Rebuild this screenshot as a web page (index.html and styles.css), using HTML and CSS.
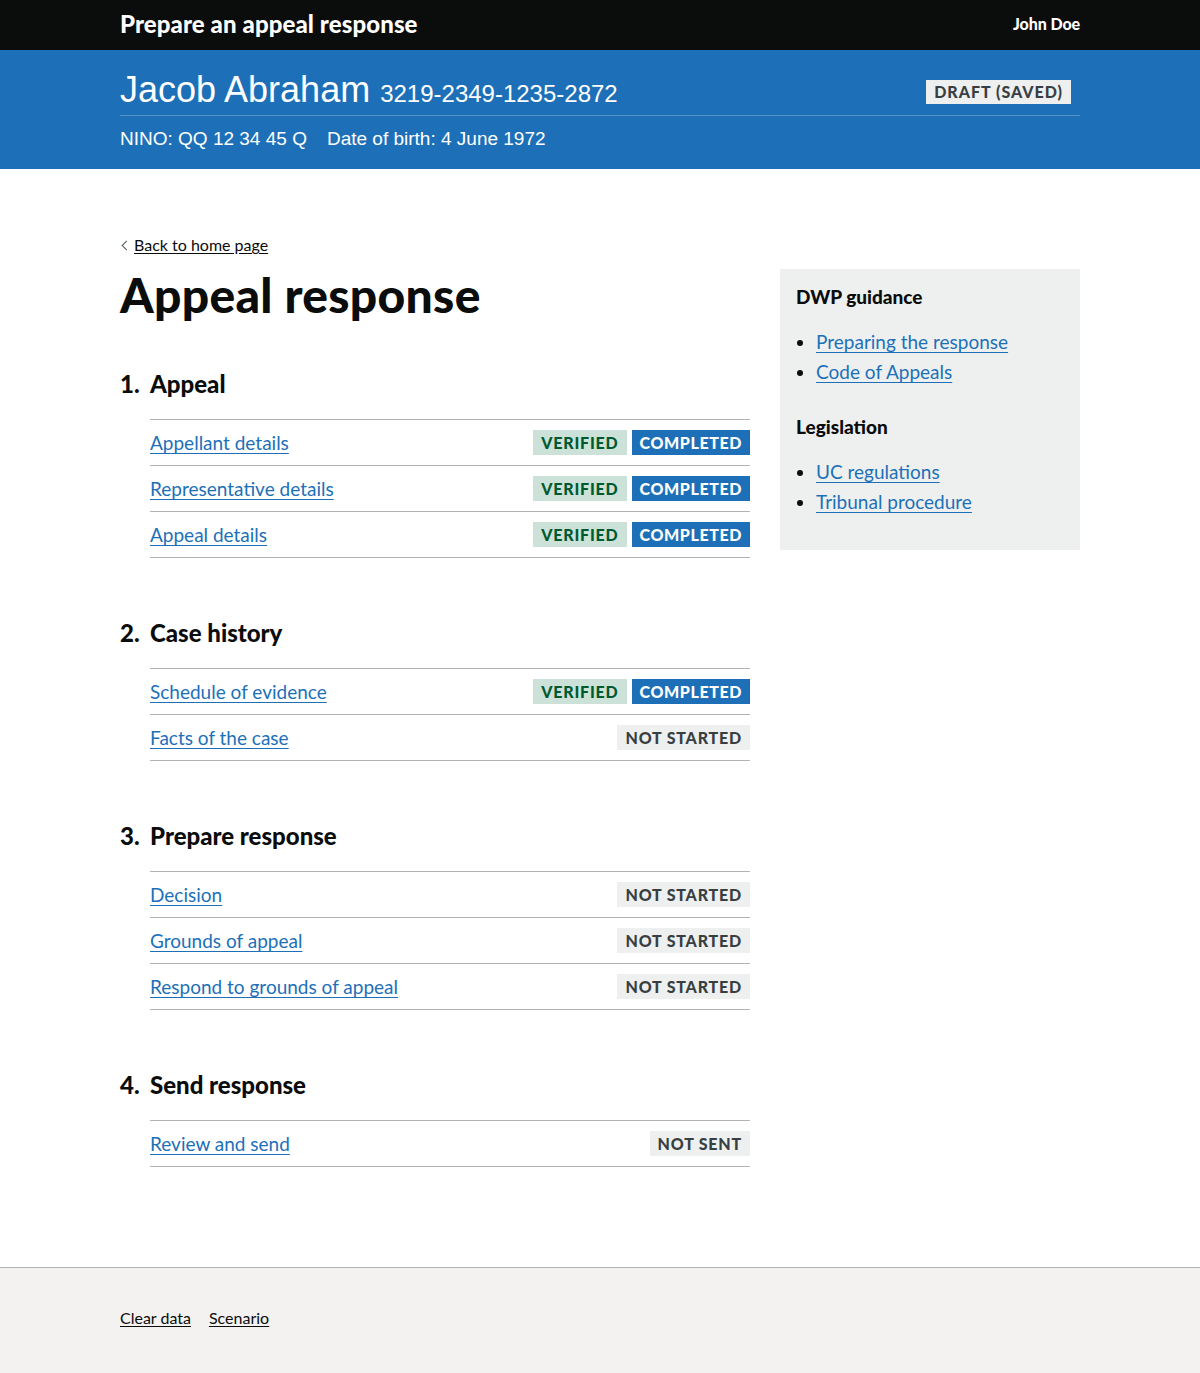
FILE: index.html
```html
<!DOCTYPE html>
<html lang="en">
<head>
<meta charset="utf-8">
<title>Appeal response</title>
<link rel="stylesheet" href="styles.css">
</head>
<body>
<header class="topbar">
  <div class="container topbar-inner">
    <span class="service-name">Prepare an appeal response</span>
    <span class="user-name">John Doe</span>
  </div>
</header>
<section class="case-banner">
  <div class="container">
    <div class="case-title-row">
      <h1 class="case-name">Jacob Abraham <span class="case-ref">3219-2349-1235-2872</span></h1>
      <span class="draft-tag">Draft (saved)</span>
    </div>
    <p class="case-meta"><span>NINO: QQ 12 34 45 Q</span><span>Date of birth: 4 June 1972</span></p>
  </div>
</section>

<main class="container main">
  <a href="#" class="back-link">Back to home page</a>
  <div class="grid">
    <div class="two-thirds">
      <h1 class="page-title">Appeal response</h1>

      <ol class="task-list">
        <li class="task-section">
          <h2 class="section-title"><span class="section-num">1.</span>Appeal</h2>
          <ul class="task-items">
            <li class="task-item"><a href="#" class="task-link">Appellant details</a><span class="tags"><span class="tag tag-green">Verified</span><span class="tag tag-blue">Completed</span></span></li>
            <li class="task-item"><a href="#" class="task-link">Representative details</a><span class="tags"><span class="tag tag-green">Verified</span><span class="tag tag-blue">Completed</span></span></li>
            <li class="task-item"><a href="#" class="task-link">Appeal details</a><span class="tags"><span class="tag tag-green">Verified</span><span class="tag tag-blue">Completed</span></span></li>
          </ul>
        </li>
        <li class="task-section">
          <h2 class="section-title"><span class="section-num">2.</span>Case history</h2>
          <ul class="task-items">
            <li class="task-item"><a href="#" class="task-link">Schedule of evidence</a><span class="tags"><span class="tag tag-green">Verified</span><span class="tag tag-blue">Completed</span></span></li>
            <li class="task-item"><a href="#" class="task-link">Facts of the case</a><span class="tags"><span class="tag tag-grey">Not started</span></span></li>
          </ul>
        </li>
        <li class="task-section">
          <h2 class="section-title"><span class="section-num">3.</span>Prepare response</h2>
          <ul class="task-items">
            <li class="task-item"><a href="#" class="task-link">Decision</a><span class="tags"><span class="tag tag-grey">Not started</span></span></li>
            <li class="task-item"><a href="#" class="task-link">Grounds of appeal</a><span class="tags"><span class="tag tag-grey">Not started</span></span></li>
            <li class="task-item"><a href="#" class="task-link">Respond to grounds of appeal</a><span class="tags"><span class="tag tag-grey">Not started</span></span></li>
          </ul>
        </li>
        <li class="task-section">
          <h2 class="section-title"><span class="section-num">4.</span>Send response</h2>
          <ul class="task-items">
            <li class="task-item"><a href="#" class="task-link">Review and send</a><span class="tags"><span class="tag tag-grey">Not sent</span></span></li>
          </ul>
        </li>
      </ol>
    </div>
    <aside class="one-third">
      <div class="sidebar">
        <h2 class="sidebar-title">DWP guidance</h2>
        <ul class="sidebar-list">
          <li><a href="#">Preparing the response</a></li>
          <li><a href="#">Code of Appeals</a></li>
        </ul>
        <h2 class="sidebar-title">Legislation</h2>
        <ul class="sidebar-list">
          <li><a href="#">UC regulations</a></li>
          <li><a href="#">Tribunal procedure</a></li>
        </ul>
      </div>
    </aside>
  </div>
</main>

<footer class="footer">
  <div class="container footer-inner">
    <a href="#" class="footer-link">Clear data</a>
    <a href="#" class="footer-link">Scenario</a>
  </div>
</footer>
</body>
</html>
```

FILE: styles.css
```css
* { box-sizing: border-box; }
html, body { margin: 0; padding: 0; }
body {
  font-family: "Lato", "Liberation Sans", Arial, sans-serif;
  color: #0b0c0c;
  background: #ffffff;
}
.container { width: 960px; margin: 0 auto; }

.topbar { background: #0b0c0c; color: #fff; height: 50px; }
.topbar-inner { display: flex; justify-content: space-between; align-items: center; height: 50px; padding-bottom: 3px; }
.service-name { font-weight: 900; font-size: 24px; letter-spacing: 0.1px; }
.user-name { font-weight: 900; font-size: 16px; letter-spacing: -0.1px; }

.case-banner { background: #1d70b8; color: #fff; height: 119px; padding-top: 20px; font-family: "Liberation Sans", Arial, sans-serif; }
.case-title-row { display: flex; justify-content: space-between; align-items: center; border-bottom: 1px solid #5694ca; padding-bottom: 1px; }
.case-name { margin: 0; font-size: 36px; font-weight: 400; line-height: 40px; }
.case-ref { font-size: 24px; }
.draft-tag {
  font-family: "Lato", "Liberation Sans", Arial, sans-serif;
  background: #eeefef; color: #383f43; font-weight: 900; font-size: 16px; line-height: 16px;
  text-transform: uppercase; letter-spacing: 1px; padding: 4px 8px 4px 8px; margin-right: 9px;
}
.case-meta { margin: 11px 0 0; font-size: 19px; line-height: 24px; display: flex; gap: 20px; }

.main { padding-top: 66px; padding-bottom: 100px; }
.back-link {
  display: inline-block; position: relative; font-size: 16px; line-height: 20px; color: #0b0c0c;
  padding-left: 14px; text-underline-offset: 2px;
}
.back-link::before {
  content: ""; position: absolute; left: 3px; top: 7px; width: 6px; height: 6px;
  border-left: 1px solid #505a5f; border-bottom: 1px solid #505a5f; transform: rotate(45deg);
}
.grid { display: flex; gap: 30px; }
.two-thirds { width: 630px; }
.one-third { width: 300px; padding-top: 14px; }

.page-title { margin: 10px 0 0; font-size: 48px; font-weight: 900; line-height: 60px; letter-spacing: 0.3px; }

.task-list { list-style: none; margin: 44px 0 0; padding: 0; }
.task-section { margin-bottom: 60px; }
.task-section:last-child { margin-bottom: 0; }
.section-title { margin: 0 0 20px; font-size: 24px; font-weight: 900; line-height: 30px; display: flex; letter-spacing: 0; }
.section-num { width: 30px; }
.task-items { list-style: none; margin: 0 0 0 30px; padding: 0; border-top: 1px solid #b1b4b6; }
.task-item {
  display: flex; justify-content: space-between; align-items: center;
  padding: 10px 0; border-bottom: 1px solid #b1b4b6; min-height: 46px;
}
.task-link { font-size: 19px; line-height: 25px; color: #1d70b8; text-underline-offset: 3px; }
.tags { display: flex; gap: 5px; }
.tag {
  font-size: 16px; font-weight: 900; line-height: 17px; text-transform: uppercase; letter-spacing: 0.8px;
  padding: 4px 8px 4px 8px; display: inline-block;
}
.tag-green { background: #cce2d8; color: #005a30; }
.tag-blue { background: #1d70b8; color: #fff; letter-spacing: 0.6px; }
.tag-grey { background: #eeefef; color: #383f43; }

.sidebar { background: #eef0f0; padding: 15px 16px 31px; }
.sidebar-title { margin: 0 0 20px; font-size: 19px; font-weight: 900; line-height: 25px; letter-spacing: 0; }
.sidebar-list { margin: 0 0 30px; padding-left: 20px; font-size: 19px; line-height: 25px; }
.sidebar-list:last-child { margin-bottom: 0; }
.sidebar-list li { margin-bottom: 5px; }
.sidebar-list a { color: #1d70b8; text-underline-offset: 3px; }

.footer { background: #f3f2f1; border-top: 1px solid #b1b4b6; padding: 40px 0; min-height: 106px; }
.footer-inner { display: flex; gap: 18px; }
.footer-link { font-size: 16px; line-height: 20px; color: #0b0c0c; text-underline-offset: 2px; }
```
